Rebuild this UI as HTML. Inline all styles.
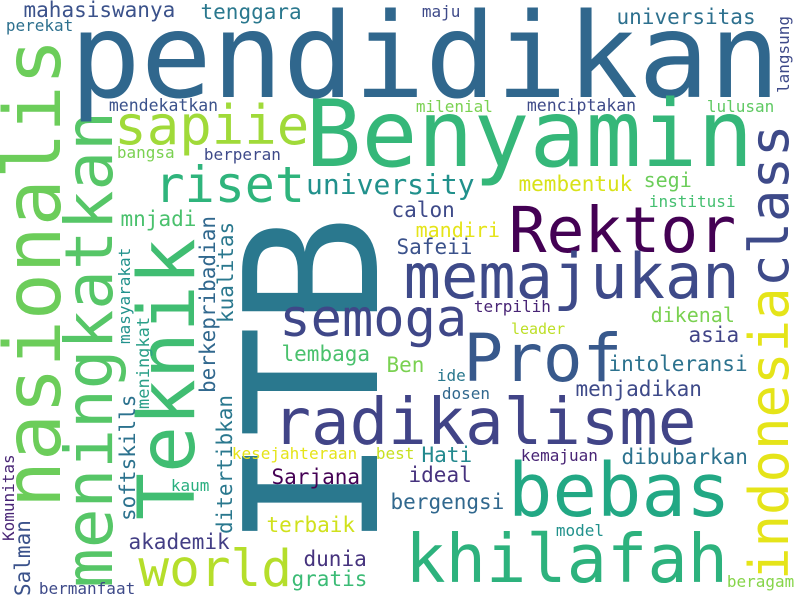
<!DOCTYPE html>
<html><head><meta charset="utf-8"><style>
html,body{margin:0;padding:0;background:#fff;}
#c{position:relative;width:800px;height:600px;overflow:hidden;background:#fff;font-family:"DejaVu Sans Mono","Liberation Mono",monospace;}
#c span{position:absolute;white-space:nowrap;line-height:1;}
.h{left:calc(var(--x)*1px - var(--f)*0.07px);top:calc(var(--b)*1px - var(--f)*0.846px);font-size:calc(var(--f)*1px);}
.v{left:calc(var(--x)*1px - var(--f)*0.086px);top:calc(var(--b)*1px + var(--f)*0.07px);font-size:calc(var(--f)*1px);transform-origin:0 0;transform:rotate(-90deg);}
</style></head><body><div id="c">
<span class="v" style="--x:237.4;--b:536;--f:185;color:#2a788e">ITB</span>
<span class="v" style="--x:2;--b:503;--f:78;color:#6ccd5a">nasionalis</span>
<span class="v" style="--x:63;--b:583;--f:66;color:#56c667">meningkatkan</span>
<span class="v" style="--x:135.7;--b:514.5;--f:78;color:#40bd72">Teknik</span>
<span class="v" style="--x:748;--b:283;--f:54;color:#3e4a89">class</span>
<span class="v" style="--x:748;--b:576;--f:54;color:#e5e419">indonesia</span>
<span class="v" style="--x:777;--b:92;--f:16;color:#3e4a89">langsung</span>
<span class="v" style="--x:200;--b:392;--f:21;color:#31688e">berkepribadian</span>
<span class="v" style="--x:218;--b:322;--f:21;color:#2a788e">kualitas</span>
<span class="v" style="--x:118;--b:343;--f:16;color:#21918c">masyarakat</span>
<span class="v" style="--x:137;--b:408;--f:17;color:#2a9f88">meningkat</span>
<span class="v" style="--x:120;--b:520;--f:21;color:#2c728e">softskills</span>
<span class="v" style="--x:217;--b:533;--f:21;color:#2a788e">ditertibkan</span>
<span class="v" style="--x:2.5;--b:540;--f:16;color:#482475">Komunitas</span>
<span class="v" style="--x:15;--b:595;--f:21;color:#3b528b">Salman</span>

<span class="h" style="--x:78;--b:97;--f:118;color:#30678d">pendidikan</span>
<span class="h" style="--x:25;--b:18;--f:21;color:#3b528b">mahasiswanya</span>
<span class="h" style="--x:202;--b:20;--f:21;color:#2a788e">tenggara</span>
<span class="h" style="--x:7;--b:32;--f:16;color:#2d708e">perekat</span>
<span class="h" style="--x:110;--b:112;--f:16.5;color:#3b528b">mendekatkan</span>
<span class="h" style="--x:118;--b:145;--f:54;color:#a0da39">sapiie</span>
<span class="h" style="--x:118;--b:159;--f:16;color:#7ad151">bangsa</span>
<span class="h" style="--x:205;--b:161;--f:16;color:#3e4a89">berperan</span>
<span class="h" style="--x:158;--b:202;--f:50;color:#2fb47c">riset</span>
<span class="h" style="--x:308;--b:195;--f:28;color:#21918c">university</span>
<span class="h" style="--x:122;--b:227;--f:21;color:#4ac16d">mnjadi</span>
<span class="h" style="--x:423;--b:18;--f:16;color:#3e4a89">maju</span>
<span class="h" style="--x:618;--b:25;--f:21;color:#2d708e">universitas</span>
<span class="h" style="--x:417;--b:113;--f:16;color:#7ad151">milenial</span>
<span class="h" style="--x:528;--b:112;--f:16.5;color:#3e4a89">menciptakan</span>
<span class="h" style="--x:708;--b:113;--f:16;color:#5ec962">lulusan</span>
<span class="h" style="--x:312;--b:167;--f:93;color:#35b779">Benyamin</span>
<span class="h" style="--x:645;--b:187;--f:20;color:#6ccd5a">segi</span>
<span class="h" style="--x:520;--b:192;--f:21;color:#d8e219">membentuk</span>
<span class="h" style="--x:650;--b:208;--f:16;color:#44bf70">institusi</span>
<span class="h" style="--x:393;--b:218;--f:21;color:#3e4a89">calon</span>
<span class="h" style="--x:417;--b:237;--f:20;color:#e5e419">mandiri</span>
<span class="h" style="--x:398;--b:255;--f:21;color:#3b528b">Safeii</span>
<span class="h" style="--x:513;--b:252;--f:63;color:#440154">Rektor</span>
<span class="h" style="--x:408;--b:298;--f:62;color:#3e4a89">memajukan</span>
<span class="h" style="--x:283;--b:337;--f:52;color:#3f4788">semoga</span>
<span class="h" style="--x:283;--b:362;--f:21;color:#4ac16d">lembaga</span>
<span class="h" style="--x:388;--b:373;--f:21;color:#7ad151">Ben</span>
<span class="h" style="--x:468;--b:382;--f:66;color:#38598c">Prof</span>
<span class="h" style="--x:610;--b:372;--f:21;color:#2c728e">intoleransi</span>
<span class="h" style="--x:438;--b:382;--f:16;color:#2a788e">ide</span>
<span class="h" style="--x:443;--b:400;--f:16;color:#31688e">dosen</span>
<span class="h" style="--x:577;--b:397;--f:21;color:#3e4a89">menjadikan</span>
<span class="h" style="--x:475;--b:313;--f:16;color:#482475">terpilih</span>
<span class="h" style="--x:652;--b:322;--f:20;color:#7ad151">dikenal</span>
<span class="h" style="--x:512;--b:335;--f:15;color:#bddf26">leader</span>
<span class="h" style="--x:690;--b:343;--f:21;color:#414487">asia</span>
<span class="h" style="--x:277;--b:445;--f:64;color:#414487">radikalisme</span>
<span class="h" style="--x:233;--b:460;--f:16;color:#e5e419">kesejahteraan</span>
<span class="h" style="--x:377;--b:460;--f:16;color:#c8e020">best</span>
<span class="h" style="--x:423;--b:463;--f:21;color:#23898e">Hati</span>
<span class="h" style="--x:522;--b:462;--f:16;color:#482475">kemajuan</span>
<span class="h" style="--x:623;--b:465;--f:21;color:#2c728e">dibubarkan</span>
<span class="h" style="--x:273;--b:485;--f:21;color:#440154">Sarjana</span>
<span class="h" style="--x:410;--b:483;--f:21;color:#46327e">ideal</span>
<span class="h" style="--x:172;--b:492;--f:16;color:#29af7f">kaum</span>
<span class="h" style="--x:392;--b:510;--f:21;color:#31688e">bergengsi</span>
<span class="h" style="--x:513;--b:517;--f:74;color:#22a884">bebas</span>
<span class="h" style="--x:268;--b:533;--f:21;color:#d0e11c">terbaik</span>
<span class="h" style="--x:557;--b:537;--f:16;color:#21918c">model</span>
<span class="h" style="--x:130;--b:550;--f:21;color:#433e85">akademik</span>
<span class="h" style="--x:305;--b:567;--f:21;color:#46337e">dunia</span>
<span class="h" style="--x:142;--b:587;--f:51;color:#b5de2b">world</span>
<span class="h" style="--x:293;--b:587;--f:21;color:#3bbb75">gratis</span>
<span class="h" style="--x:410;--b:583;--f:67;color:#2db27d">khilafah</span>
<span class="h" style="--x:40;--b:595;--f:16;color:#3e4a89">bermanfaat</span>
<span class="h" style="--x:728;--b:588;--f:16;color:#86d549">beragam</span>
</div></body></html>
